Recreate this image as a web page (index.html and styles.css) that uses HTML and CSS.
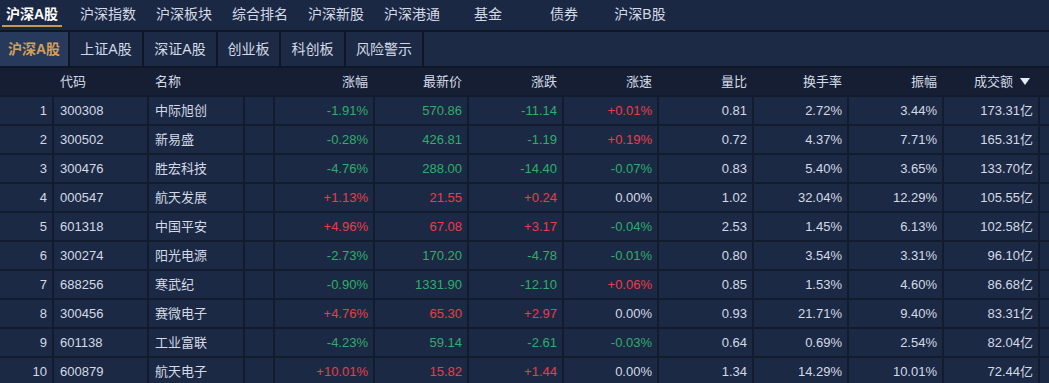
FILE: index.html
```html
<!DOCTYPE html>
<html lang="zh">
<head>
<meta charset="utf-8">
<title>沪深A股</title>
<link rel="stylesheet" href="styles.css">
</head>
<body>
<div class="page">
  <nav class="topnav">
    <a class="nav-item first active">沪深A股</a>
    <a class="nav-item">沪深指数</a>
    <a class="nav-item">沪深板块</a>
    <a class="nav-item">综合排名</a>
    <a class="nav-item">沪深新股</a>
    <a class="nav-item">沪深港通</a>
    <a class="nav-item">基金</a>
    <a class="nav-item">债券</a>
    <a class="nav-item">沪深B股</a>
  </nav>
  <div class="tabs">
    <a class="tab t1 active">沪深A股</a>
    <a class="tab t2">上证A股</a>
    <a class="tab t2">深证A股</a>
    <a class="tab t3">创业板</a>
    <a class="tab t4">科创板</a>
    <a class="tab t5">风险警示</a>
  </div>
  <div class="grid">
    <div class="row head">
      <div class="c"></div>
      <div class="c l">代码</div>
      <div class="c l">名称</div>
      <div class="c"></div>
      <div class="c">涨幅</div>
      <div class="c">最新价</div>
      <div class="c">涨跌</div>
      <div class="c">涨速</div>
      <div class="c">量比</div>
      <div class="c">换手率</div>
      <div class="c">振幅</div>
      <div class="c sort">成交额<svg class="tri" width="10" height="7" viewBox="0 0 10 7"><path d="M0 0H10L5 7Z" fill="#e6ebf2"/></svg></div>
      <div class="c"></div>
    </div>
    <div class="row"><div class="c">1</div><div class="c l">300308</div><div class="c l">中际旭创</div><div class="c"></div><div class="c dn">-1.91%</div><div class="c dn">570.86</div><div class="c dn">-11.14</div><div class="c up">+0.01%</div><div class="c">0.81</div><div class="c">2.72%</div><div class="c">3.44%</div><div class="c">173.31亿</div><div class="c"></div></div>
    <div class="row"><div class="c">2</div><div class="c l">300502</div><div class="c l">新易盛</div><div class="c"></div><div class="c dn">-0.28%</div><div class="c dn">426.81</div><div class="c dn">-1.19</div><div class="c up">+0.19%</div><div class="c">0.72</div><div class="c">4.37%</div><div class="c">7.71%</div><div class="c">165.31亿</div><div class="c"></div></div>
    <div class="row"><div class="c">3</div><div class="c l">300476</div><div class="c l">胜宏科技</div><div class="c"></div><div class="c dn">-4.76%</div><div class="c dn">288.00</div><div class="c dn">-14.40</div><div class="c dn">-0.07%</div><div class="c">0.83</div><div class="c">5.40%</div><div class="c">3.65%</div><div class="c">133.70亿</div><div class="c"></div></div>
    <div class="row"><div class="c">4</div><div class="c l">000547</div><div class="c l">航天发展</div><div class="c"></div><div class="c up">+1.13%</div><div class="c up">21.55</div><div class="c up">+0.24</div><div class="c">0.00%</div><div class="c">1.02</div><div class="c">32.04%</div><div class="c">12.29%</div><div class="c">105.55亿</div><div class="c"></div></div>
    <div class="row"><div class="c">5</div><div class="c l">601318</div><div class="c l">中国平安</div><div class="c"></div><div class="c up">+4.96%</div><div class="c up">67.08</div><div class="c up">+3.17</div><div class="c dn">-0.04%</div><div class="c">2.53</div><div class="c">1.45%</div><div class="c">6.13%</div><div class="c">102.58亿</div><div class="c"></div></div>
    <div class="row"><div class="c">6</div><div class="c l">300274</div><div class="c l">阳光电源</div><div class="c"></div><div class="c dn">-2.73%</div><div class="c dn">170.20</div><div class="c dn">-4.78</div><div class="c dn">-0.01%</div><div class="c">0.80</div><div class="c">3.54%</div><div class="c">3.31%</div><div class="c">96.10亿</div><div class="c"></div></div>
    <div class="row"><div class="c">7</div><div class="c l">688256</div><div class="c l">寒武纪</div><div class="c"></div><div class="c dn">-0.90%</div><div class="c dn">1331.90</div><div class="c dn">-12.10</div><div class="c up">+0.06%</div><div class="c">0.85</div><div class="c">1.53%</div><div class="c">4.60%</div><div class="c">86.68亿</div><div class="c"></div></div>
    <div class="row"><div class="c">8</div><div class="c l">300456</div><div class="c l">赛微电子</div><div class="c"></div><div class="c up">+4.76%</div><div class="c up">65.30</div><div class="c up">+2.97</div><div class="c">0.00%</div><div class="c">0.93</div><div class="c">21.71%</div><div class="c">9.40%</div><div class="c">83.31亿</div><div class="c"></div></div>
    <div class="row"><div class="c">9</div><div class="c l">601138</div><div class="c l">工业富联</div><div class="c"></div><div class="c dn">-4.23%</div><div class="c dn">59.14</div><div class="c dn">-2.61</div><div class="c dn">-0.03%</div><div class="c">0.64</div><div class="c">0.69%</div><div class="c">2.54%</div><div class="c">82.04亿</div><div class="c"></div></div>
    <div class="row"><div class="c">10</div><div class="c l">600879</div><div class="c l">航天电子</div><div class="c"></div><div class="c up">+10.01%</div><div class="c up">15.82</div><div class="c up">+1.44</div><div class="c">0.00%</div><div class="c">1.34</div><div class="c">14.29%</div><div class="c">10.01%</div><div class="c">72.44亿</div><div class="c"></div></div>
  </div>
</div>
</body>
</html>
```
FILE: styles.css
```css
html, body {
  margin: 0;
  padding: 0;
  background: #131b2e;
}
.page {
  width: 1049px;
  height: 383px;
  overflow: hidden;
  font-family: "Liberation Sans", "Noto Sans CJK SC", sans-serif;
  color: #d3dae6;
  background: #131b2e;
}
.topnav {
  display: flex;
  height: 30px;
  background: #1b2843;
  border-bottom: 2px solid #0f1626;
}
.nav-item {
  position: relative;
  width: 76px;
  text-align: center;
  font-size: 14px;
  line-height: 28px;
  color: #d3dae6;
}
.nav-item.first {
  width: 64px;
  margin-right: 6px;
}
.nav-item.active {
  color: #ffffff;
  font-weight: bold;
}
.nav-item.active::after {
  content: "";
  position: absolute;
  left: 2px;
  right: 2px;
  top: 25px;
  height: 2px;
  background: #c8955a;
}
.tabs {
  display: flex;
  height: 34px;
  background: #1c2a45;
  border-bottom: 2px solid #0f1626;
}
.tab {
  font-size: 14px;
  line-height: 34px;
  text-align: center;
  color: #d3dae6;
  border-right: 2px solid #0f1626;
}
.tab.t1 { width: 68px; }
.tab.t2 { width: 72px; }
.tab.t3 { width: 61px; }
.tab.t4 { width: 63px; }
.tab.t5 { width: 76px; }
.tab.active {
  background: #283a5c;
  color: #d4a05a;
  font-weight: bold;
}
.grid {
  background: #131b2e;
}
.row {
  display: grid;
  grid-template-columns: 52px 93px 94px 28px 98px 92px 93px 93px 93px 93px 93px 94px 1fr;
  column-gap: 2px;
  height: 27px;
  margin-bottom: 2px;
}
.row .c {
  background: #1c2944;
  font-size: 13px;
  line-height: 27px;
  text-align: right;
  padding: 0 5px 0 0;
  white-space: nowrap;
  overflow: hidden;
}
.row .c.l {
  text-align: left;
  padding: 0 0 0 6px;
}
.row.head {
  background: #151e33;
}
.row.head .c {
  background: transparent;
  color: #d3dae6;
  line-height: 28px;
}
.row.head .c.sort {
  padding-right: 8px;
}
.tri {
  display: inline-block;
  margin-left: 7px;
  vertical-align: 1px;
}
.c.up { color: #ea3d48; }
.c.dn { color: #2fae6b; }
```
